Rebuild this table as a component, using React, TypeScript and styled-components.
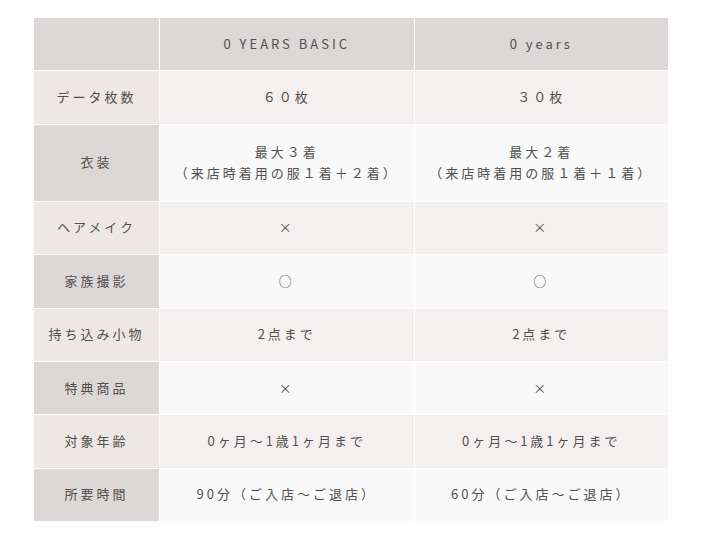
import React from 'react';
import styled, { createGlobalStyle, css } from 'styled-components';

const GlobalStyle = createGlobalStyle`
  html, body {
    margin: 0;
    padding: 0;
    background: #ffffff;
  }
  body {
    font-family: 'Noto Sans CJK JP', 'Noto Sans', sans-serif;
    color: #555555;
  }
`;

const Page = styled.div`
  padding: 18px 34px;
`;

const PlanTable = styled.div`
  display: grid;
  grid-template-columns: 125px 1fr 1fr;
  gap: 1px;
  width: 634px;
  background: #ffffff;
`;

type CellKind = 'head' | 'label' | 'value';

const Cell = styled.div<{ $kind: CellKind; $even?: boolean; $tall?: boolean }>`
  display: flex;
  align-items: center;
  justify-content: center;
  flex-direction: column;
  box-sizing: border-box;
  height: ${(p) => (p.$tall ? '76px' : '52.4px')};
  padding-bottom: 2px;
  font-size: 13px;
  line-height: 21px;
  letter-spacing: 0.23em;
  text-align: center;
  color: #505050;
  ${(p) =>
    p.$kind === 'head' &&
    css`
      background: #dcd8d7;
    `}
  ${(p) =>
    p.$kind === 'label' &&
    css`
      background: ${p.$even ? '#dcd8d7' : '#ede7e6'};
    `}
  ${(p) =>
    p.$kind === 'value' &&
    css`
      background: ${p.$even ? '#f9f9f9' : '#f4f0ef'};
    `}
`;

const Line = styled.span`
  display: block;
`;

const rows: { label: string; basic: string[]; years: string[]; tall?: boolean }[] = [
  { label: 'データ枚数', basic: ['６０枚'], years: ['３０枚'] },
  {
    label: '衣装',
    basic: ['最大３着', '（来店時着用の服１着＋２着）'],
    years: ['最大２着', '（来店時着用の服１着＋１着）'],
    tall: true,
  },
  { label: 'ヘアメイク', basic: ['×'], years: ['×'] },
  { label: '家族撮影', basic: ['○'], years: ['○'] },
  { label: '持ち込み小物', basic: ['2点まで'], years: ['2点まで'] },
  { label: '特典商品', basic: ['×'], years: ['×'] },
  { label: '対象年齢', basic: ['0ヶ月～1歳1ヶ月まで'], years: ['0ヶ月～1歳1ヶ月まで'] },
  { label: '所要時間', basic: ['90分（ご入店～ご退店）'], years: ['60分（ご入店～ご退店）'] },
];

export default function App() {
  return (
    <>
      <GlobalStyle />
      <Page>
        <PlanTable>
          <Cell $kind="head" />
          <Cell $kind="head">0 YEARS BASIC</Cell>
          <Cell $kind="head">0 years</Cell>
          {rows.map((row, i) => {
            const even = i % 2 === 1;
            return (
              <React.Fragment key={row.label}>
                <Cell $kind="label" $even={even} $tall={row.tall}>
                  {row.label}
                </Cell>
                <Cell $kind="value" $even={even} $tall={row.tall}>
                  {row.basic.map((t) => (
                    <Line key={t}>{t}</Line>
                  ))}
                </Cell>
                <Cell $kind="value" $even={even} $tall={row.tall}>
                  {row.years.map((t) => (
                    <Line key={t}>{t}</Line>
                  ))}
                </Cell>
              </React.Fragment>
            );
          })}
        </PlanTable>
      </Page>
    </>
  );
}
